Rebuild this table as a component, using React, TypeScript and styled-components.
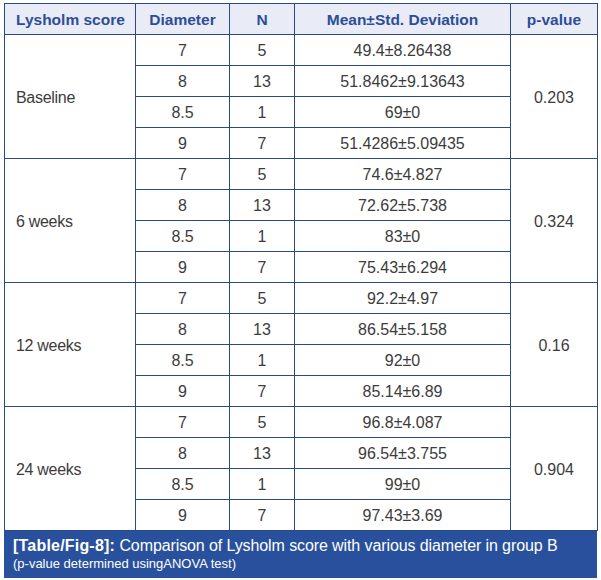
import React from 'react';
import styled, {createGlobalStyle} from 'styled-components';

const GlobalStyle = createGlobalStyle`
  body {
    margin: 0;
    background: #ffffff;
    font-family: "Liberation Sans", Arial, sans-serif;
  }
`

const Page = styled.div`
  padding: 3px 0 0 4px;
  width: 593px;
`

const Table = styled.table`
  width: 593px;
  border-collapse: collapse;
  table-layout: fixed;
  border-left: 1px solid #2a4a82;
  border-right: 1px solid #2a4a82;
`

const HeadRow = styled.tr`
  background: #e9ecf6;
`

const HeadCell = styled.th<{$left?: boolean}>`
  box-sizing: border-box;
  height: 31px;
  padding: 1px 0 0 ${p => (p.$left ? '11px' : '0')};
  border: 1px solid #2a4a82;
  font-size: 15.5px;
  font-weight: bold;
  color: #2d4e97;
  text-align: ${p => (p.$left ? 'left' : 'center')};
  vertical-align: middle;
`

const Cell = styled.td<{$left?: boolean}>`
  box-sizing: border-box;
  height: 31px;
  padding: 2px 0 0 ${p => (p.$left ? '11px' : '0')};
  border: 1px solid #2a4a82;
  font-size: 16px;
  letter-spacing: ${p => (p.$left ? '-0.3px' : '0')};
  color: #3c3c3c;
  text-align: ${p => (p.$left ? 'left' : 'center')};
  vertical-align: middle;
`

const Caption = styled.div`
  box-sizing: border-box;
  width: 593px;
  height: 47px;
  padding: 5px 9px 0;
  background: #28509c;
  color: #ffffff;
`

const CaptionTitle = styled.div`
  font-size: 16px;
  line-height: 19px;
  letter-spacing: -0.1px;
`

const CaptionLabel = styled.b`
  font-weight: bold;
  letter-spacing: 0.2px;
`

const CaptionNote = styled.div`
  font-size: 13px;
  line-height: 18px;
`

type Group = {
  label: string;
  p: string;
  rows: [string, string, string][];
}

const groups: Group[] = [
  {
    label: 'Baseline', p: '0.203', rows: [
      ['7', '5', '49.4±8.26438'],
      ['8', '13', '51.8462±9.13643'],
      ['8.5', '1', '69±0'],
      ['9', '7', '51.4286±5.09435'],
    ]
  },
  {
    label: '6 weeks', p: '0.324', rows: [
      ['7', '5', '74.6±4.827'],
      ['8', '13', '72.62±5.738'],
      ['8.5', '1', '83±0'],
      ['9', '7', '75.43±6.294'],
    ]
  },
  {
    label: '12 weeks', p: '0.16', rows: [
      ['7', '5', '92.2±4.97'],
      ['8', '13', '86.54±5.158'],
      ['8.5', '1', '92±0'],
      ['9', '7', '85.14±6.89'],
    ]
  },
  {
    label: '24 weeks', p: '0.904', rows: [
      ['7', '5', '96.8±4.087'],
      ['8', '13', '96.54±3.755'],
      ['8.5', '1', '99±0'],
      ['9', '7', '97.43±3.69'],
    ]
  },
]

const App = () => {
  return (
    <Page>
      <GlobalStyle/>
      <Table>
        <colgroup>
          <col style={{width: 131}}/>
          <col style={{width: 94}}/>
          <col style={{width: 65}}/>
          <col style={{width: 216}}/>
          <col style={{width: 87}}/>
        </colgroup>
        <thead>
          <HeadRow>
            <HeadCell $left>Lysholm score</HeadCell>
            <HeadCell>Diameter</HeadCell>
            <HeadCell>N</HeadCell>
            <HeadCell>Mean±Std. Deviation</HeadCell>
            <HeadCell>p-value</HeadCell>
          </HeadRow>
        </thead>
        <tbody>
          {groups.map(g => g.rows.map((r, i) => (
            <tr key={g.label + i}>
              {i === 0 && <Cell $left rowSpan={4}>{g.label}</Cell>}
              <Cell>{r[0]}</Cell>
              <Cell>{r[1]}</Cell>
              <Cell>{r[2]}</Cell>
              {i === 0 && <Cell rowSpan={4}>{g.p}</Cell>}
            </tr>
          )))}
        </tbody>
      </Table>
      <Caption>
        <CaptionTitle>
          <CaptionLabel>[Table/Fig-8]:</CaptionLabel> Comparison of Lysholm score with various diameter in group B
        </CaptionTitle>
        <CaptionNote>(p-value determined usingANOVA test)</CaptionNote>
      </Caption>
    </Page>
  );
};

export default App;
